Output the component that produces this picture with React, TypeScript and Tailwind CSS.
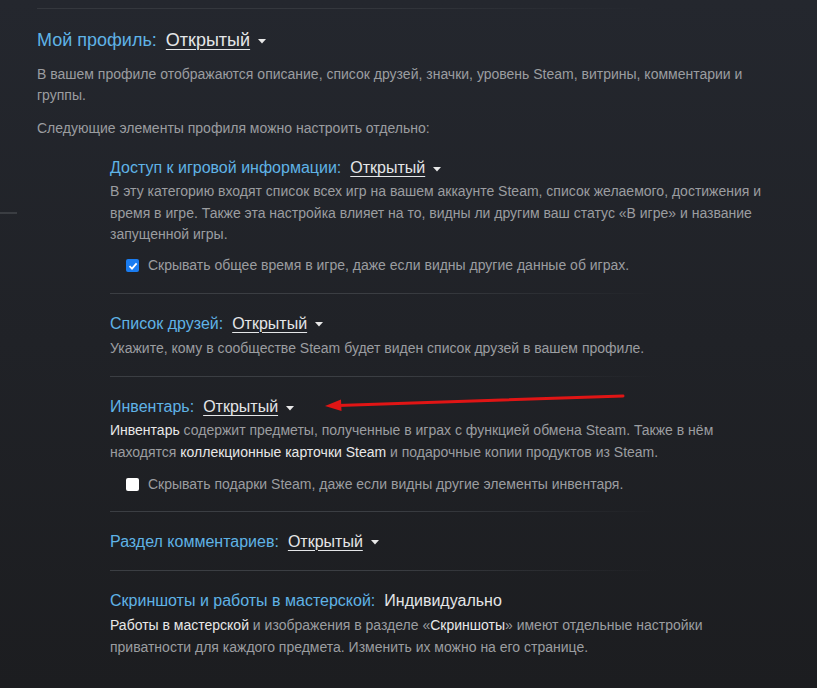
const font = { fontFamily: '"Liberation Sans", Arial, sans-serif' };

function Caret() {
  return (
    <svg width="8" height="5" viewBox="0 0 8 5" className="ml-2 mt-[2px] inline-block">
      <path d="M0 0 L8 0 L4 4.5 Z" fill="#e8e8e8" />
    </svg>
  );
}

function Heading({
  label,
  value,
  big,
  dropdown = true,
}: {
  label: string;
  value: string;
  big?: boolean;
  dropdown?: boolean;
}) {
  return (
    <div className={`flex items-center ${big ? "text-[18px] leading-6" : "text-[16px] leading-[22px]"}`}>
      <span className="text-[#5fb3e6]">{label}</span>
      <span className={`ml-[9px] text-[#e4e6e8] ${dropdown ? "underline underline-offset-[3px] decoration-1" : ""}`}>
        {value}
      </span>
      {dropdown && <Caret />}
    </div>
  );
}

function Check({ checked, label, gap }: { checked: boolean; label: string; gap: string }) {
  return (
    <div className={`${gap} ml-[16px] flex h-5 items-center text-[14px] text-[#9b9da0]`}>
      {checked ? (
        <span className="flex h-[13px] w-[13px] items-center justify-center rounded-[2px] bg-[#1a7cf0]">
          <svg width="10" height="10" viewBox="0 0 10 10">
            <path d="M1.5 5.2 L4 7.6 L8.6 2.4" stroke="white" strokeWidth="1.8" fill="none" />
          </svg>
        </span>
      ) : (
        <span className="h-[13px] w-[13px] rounded-[2px] bg-white" />
      )}
      <span className="ml-[9px]">{label}</span>
    </div>
  );
}

function Sep() {
  return <div className="h-px w-[548px] bg-gradient-to-r from-[#3b3e43] via-[#3b3e43] to-transparent" />;
}

const b = "text-[#e8e8e8]";

export default function App() {
  return (
    <div
      className="relative h-[688px] w-[817px] overflow-hidden bg-gradient-to-b from-[#24272e] to-[#1c1d20]"
      style={font}
    >
      <div className="absolute left-0 top-[212px] h-[2px] w-[17px] bg-[#3a3d42]" />

      <div className="pl-[37px] pt-[8px]">
        <div className="h-px w-[618px] bg-gradient-to-r from-[#34373d] via-[#34373d] to-transparent" />

        <div className="mt-[19px]">
          <Heading label="Мой профиль:" value="Открытый" big />
        </div>
        <p className="mt-[12px] w-[733px] text-[14px] leading-[21px] text-[#9b9da0]">
          В вашем профиле отображаются описание, список друзей, значки, уровень Steam, витрины, комментарии и
          группы.
        </p>
        <p className="mt-[12px] text-[14px] leading-[21px] text-[#9b9da0]">
          Следующие элементы профиля можно настроить отдельно:
        </p>

        <div className="ml-[73px] mt-[18px] w-[660px] text-[14px] text-[#9b9da0]">
          <div className="pb-[17px]">
            <Heading label="Доступ к игровой информации:" value="Открытый" />
            <p className="mt-[2px] leading-[21.5px]">
              В эту категорию входят список всех игр на вашем аккаунте Steam, список желаемого, достижения и
              время в игре. Также эта настройка влияет на то, видны ли другим ваш статус «В игре» и название
              запущенной игры.
            </p>
            <Check gap="mt-[10px]" checked label="Скрывать общее время в игре, даже если видны другие данные об играх." />
          </div>
          <Sep />
          <div className="pt-[19px] pb-[17px]">
            <Heading label="Список друзей:" value="Открытый" />
            <p className="mt-[3px] leading-[21px]">
              Укажите, кому в сообществе Steam будет виден список друзей в вашем профиле.
            </p>
          </div>
          <Sep />
          <div className="pt-[19.5px] pb-[17px]">
            <Heading label="Инвентарь:" value="Открытый" />
            <p className="mt-[2px] leading-[21.5px]">
              <span className={b}>Инвентарь</span> содержит предметы, полученные в играх с функцией обмена Steam.
              Также в нём находятся <span className={b}>коллекционные карточки Steam</span> и подарочные копии
              продуктов из Steam.
            </p>
            <Check gap="mt-[11px]" checked={false} label="Скрывать подарки Steam, даже если видны другие элементы инвентаря." />
          </div>
          <Sep />
          <div className="pt-[18.5px] pb-[17px]">
            <Heading label="Раздел комментариев:" value="Открытый" />
          </div>
          <Sep />
          <div className="pt-[19.5px]">
            <Heading label="Скриншоты и работы в мастерской:" value="Индивидуально" dropdown={false} />
            <p className="mt-[3px] leading-[21.5px]">
              <span className={b}>Работы в мастерской</span> и изображения в разделе «
              <span className={b}>Скриншоты</span>» имеют отдельные настройки приватности для каждого предмета.
              Изменить их можно на его странице.
            </p>
          </div>
        </div>
      </div>

      <svg className="absolute left-[320px] top-[390px]" width="310" height="24" viewBox="0 0 310 24">
        <path d="M303 6 L18 15.5" stroke="#e01515" strokeWidth="3" strokeLinecap="round" />
        <path d="M5 16 L21 9.5 L21.5 21 Z" fill="#e01515" />
      </svg>
    </div>
  );
}
